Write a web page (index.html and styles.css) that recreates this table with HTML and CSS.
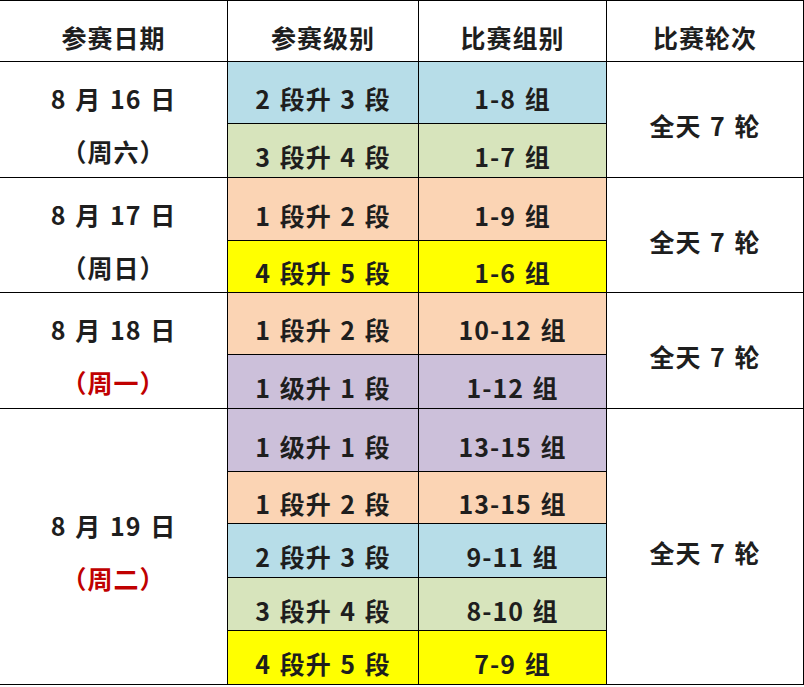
FILE: index.html
```html
<!DOCTYPE html>
<html lang="zh-CN">
<head>
<meta charset="utf-8">
<title>赛程表</title>
<link rel="stylesheet" href="styles.css">
</head>
<body>
<div class="schedule">
  <div class="cell head">参赛日期</div>
  <div class="cell head">参赛级别</div>
  <div class="cell head">比赛组别</div>
  <div class="cell head">比赛轮次</div>

  <div class="cell date span2"><span class="line">8 月 16 日</span><span class="line">（周六）</span></div>
  <div class="cell blue">2 段升 3 段</div>
  <div class="cell blue">1-8 组</div>
  <div class="cell rounds span2">全天 7 轮</div>
  <div class="cell green">3 段升 4 段</div>
  <div class="cell green">1-7 组</div>

  <div class="cell date span2"><span class="line">8 月 17 日</span><span class="line">（周日）</span></div>
  <div class="cell peach">1 段升 2 段</div>
  <div class="cell peach">1-9 组</div>
  <div class="cell rounds span2">全天 7 轮</div>
  <div class="cell yellow">4 段升 5 段</div>
  <div class="cell yellow">1-6 组</div>

  <div class="cell date span2"><span class="line">8 月 18 日</span><span class="line red">（周一）</span></div>
  <div class="cell peach">1 段升 2 段</div>
  <div class="cell peach">10-12 组</div>
  <div class="cell rounds span2">全天 7 轮</div>
  <div class="cell purple">1 级升 1 段</div>
  <div class="cell purple">1-12 组</div>

  <div class="cell date span5"><span class="line">8 月 19 日</span><span class="line red">（周二）</span></div>
  <div class="cell purple">1 级升 1 段</div>
  <div class="cell purple">13-15 组</div>
  <div class="cell rounds span5">全天 7 轮</div>
  <div class="cell peach">1 段升 2 段</div>
  <div class="cell peach">13-15 组</div>
  <div class="cell blue">2 段升 3 段</div>
  <div class="cell blue">9-11 组</div>
  <div class="cell green">3 段升 4 段</div>
  <div class="cell green">8-10 组</div>
  <div class="cell yellow">4 段升 5 段</div>
  <div class="cell yellow">7-9 组</div>
</div>
</body>
</html>
```

FILE: styles.css
```css
html, body {
  margin: 0;
  padding: 0;
  background: #ffffff;
}

body {
  width: 804px;
  height: 687px;
  overflow: hidden;
  font-family: "Noto Sans CJK SC", "Noto Sans", sans-serif;
  font-weight: 700;
  color: #1e1e1e;
}

.schedule {
  display: grid;
  grid-template-columns: 227px 190px 187px 196px;
  grid-template-rows: 60px 61px 53px 62px 51px 61px 53px 62px 51px 53px 52px 53px;
  gap: 1px;
  padding: 1px 1px 1px 0;
  background: #000000;
  width: 804px;
  box-sizing: border-box;
}

.cell {
  background: #ffffff;
  display: flex;
  align-items: center;
  justify-content: center;
  padding-top: 11px;
  box-sizing: border-box;
  font-size: 25px;
  letter-spacing: 1px;
  word-spacing: 2px;
  white-space: pre;
}

.date {
  flex-direction: column;
}

.date .line {
  line-height: 53px;
  display: block;
}

.span2 {
  grid-row: span 2;
}

.span5 {
  grid-row: span 5;
}

.red {
  color: #c00000;
}

.blue { background: #b7dde8; }
.green { background: #d7e4bc; }
.peach { background: #fbd4b4; }
.yellow { background: #ffff00; }
.purple { background: #ccc0da; }
```
